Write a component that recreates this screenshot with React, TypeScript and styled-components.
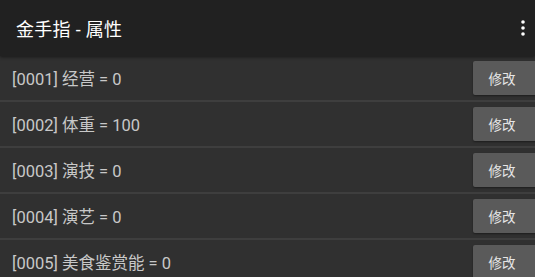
import React from "react";
import styled, { createGlobalStyle } from "styled-components";

const GlobalStyle = createGlobalStyle`
  html, body {
    margin: 0;
    padding: 0;
    background: #303030;
    overflow: hidden;
  }
  body {
    font-family: Roboto, "Noto Sans CJK SC", sans-serif;
  }
`;

const Page = styled.div`
  width: 535px;
  height: 277px;
  display: flex;
  flex-direction: column;
  background: #303030;
  overflow: hidden;
`;

const Toolbar = styled.div`
  height: 56px;
  flex: none;
  display: flex;
  align-items: center;
  justify-content: space-between;
  padding: 0 0 0 16px;
  background: #212121;
  box-shadow: 0 1px 3px rgba(0, 0, 0, 0.5);
  position: relative;
  z-index: 1;
`;

const Title = styled.h1`
  margin: 0;
  font-size: 18px;
  font-weight: 400;
  color: #ffffff;
  letter-spacing: 0.3px;
`;

const MenuButton = styled.button`
  width: 24px;
  height: 40px;
  border: 0;
  background: none;
  padding: 0;
  display: flex;
  align-items: center;
  justify-content: center;
`;

const List = styled.div`
  display: flex;
  flex-direction: column;
`;

const Row = styled.div`
  height: 44px;
  flex: none;
  display: flex;
  align-items: center;
  justify-content: space-between;
  padding-left: 12px;
  border-bottom: 2px solid #3e3e3e;
`;

const Label = styled.span`
  font-size: 16.5px;
  color: #c8c8c8;
`;

const EditButton = styled.button`
  width: 66px;
  height: 34px;
  margin-right: -4px;
  border: 0;
  border-radius: 2px;
  background: #5a5a5a;
  color: #e6e6e6;
  font-family: inherit;
  font-size: 13.5px;
  padding: 0 8px 0 0;
  box-shadow: 0 1px 2px rgba(0, 0, 0, 0.4);
`;

type Attr = { id: string; name: string; value: number };

const attrs: Attr[] = [
  { id: "0001", name: "经营", value: 0 },
  { id: "0002", name: "体重", value: 100 },
  { id: "0003", name: "演技", value: 0 },
  { id: "0004", name: "演艺", value: 0 },
  { id: "0005", name: "美食鉴赏能", value: 0 },
];

function MoreIcon() {
  return (
    <svg width="4" height="16" viewBox="0 0 4 16">
      <circle cx="2" cy="2" r="1.8" fill="#fff" />
      <circle cx="2" cy="8" r="1.8" fill="#fff" />
      <circle cx="2" cy="14" r="1.8" fill="#fff" />
    </svg>
  );
}

export default function App() {
  return (
    <Page>
      <GlobalStyle />
      <Toolbar>
        <Title>金手指 - 属性</Title>
        <MenuButton aria-label="more">
          <MoreIcon />
        </MenuButton>
      </Toolbar>
      <List>
        {attrs.map((a) => (
          <Row key={a.id}>
            <Label>
              [{a.id}] {a.name} = {a.value}
            </Label>
            <EditButton>修改</EditButton>
          </Row>
        ))}
      </List>
    </Page>
  );
}
